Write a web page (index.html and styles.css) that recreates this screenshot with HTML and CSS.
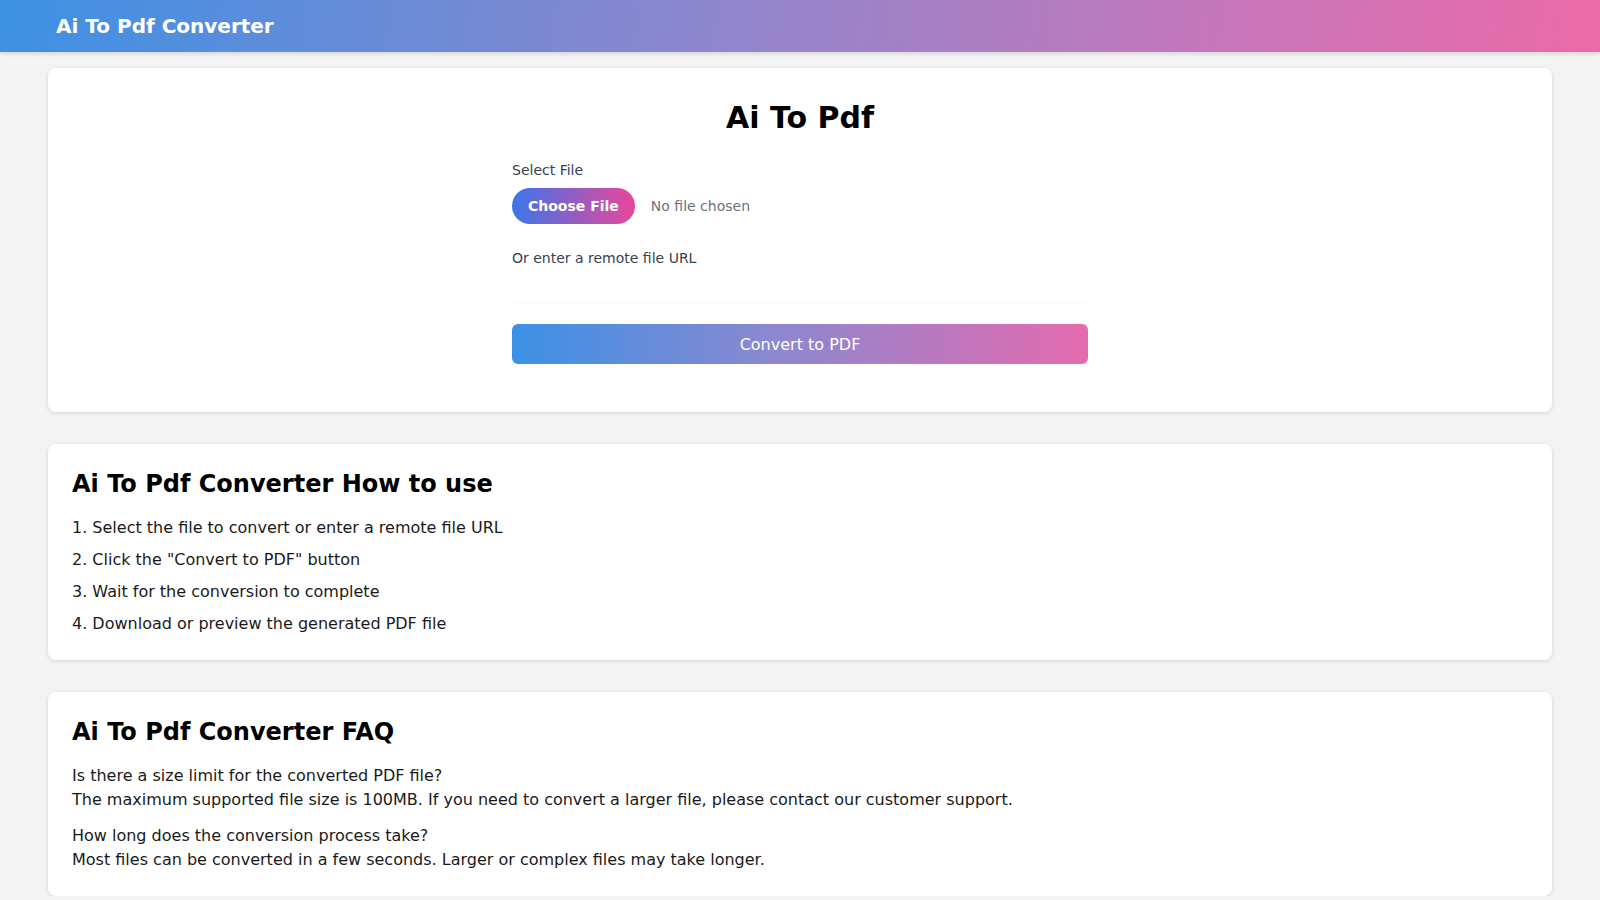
FILE: index.html
```html
<!DOCTYPE html>
<html lang="en">
<head>
<meta charset="utf-8">
<title>Ai To Pdf Converter</title>
<link rel="stylesheet" href="styles.css">
</head>
<body>
<header class="topbar">
  <div class="brand">Ai To Pdf Converter</div>
</header>
<main class="container">
  <section class="card tool">
    <h1 class="tool-title">Ai To Pdf</h1>
    <form class="form">
      <label class="label">Select File</label>
      <div class="file-row">
        <span class="file-btn">Choose File</span>
        <span class="file-name">No file chosen</span>
      </div>
      <label class="label label-url">Or enter a remote file URL</label>
      <input class="url-input" type="text">
      <button class="convert" type="button">Convert to PDF</button>
    </form>
  </section>
  <section class="card info">
    <h2 class="card-title">Ai To Pdf Converter How to use</h2>
    <ol class="steps">
      <li>1. Select the file to convert or enter a remote file URL</li>
      <li>2. Click the "Convert to PDF" button</li>
      <li>3. Wait for the conversion to complete</li>
      <li>4. Download or preview the generated PDF file</li>
    </ol>
  </section>
  <section class="card info">
    <h2 class="card-title">Ai To Pdf Converter FAQ</h2>
    <div class="faq">
      <p>Is there a size limit for the converted PDF file?</p>
      <p>The maximum supported file size is 100MB. If you need to convert a larger file, please contact our customer support.</p>
    </div>
    <div class="faq">
      <p>How long does the conversion process take?</p>
      <p>Most files can be converted in a few seconds. Larger or complex files may take longer.</p>
    </div>
  </section>
</main>
</body>
</html>
```
FILE: styles.css
```css
* { box-sizing: border-box; }
html, body { margin: 0; padding: 0; }
body {
  font-family: "DejaVu Sans", sans-serif;
  background: #f3f3f3;
  color: #111;
}
.topbar {
  height: 52px;
  display: flex;
  align-items: center;
  padding: 0 56px;
  background: linear-gradient(100deg, #3d91e4 0%, #8f86cc 45%, #c477bb 75%, #ec6aa8 100%);
  box-shadow: 0 2px 4px rgba(0,0,0,0.12);
}
.brand {
  color: #fff;
  font-weight: bold;
  font-size: 20px;
}
.container {
  padding: 16px 48px 0;
  display: flex;
  flex-direction: column;
  gap: 32px;
}
.card {
  background: #fff;
  border-radius: 8px;
  box-shadow: 0 1px 4px rgba(0,0,0,0.12);
}
.tool {
  padding: 32px 32px 48px;
}
.tool-title {
  margin: 0;
  text-align: center;
  font-size: 30px;
  line-height: 36px;
  font-weight: bold;
  color: #000;
}
.form {
  width: 576px;
  margin: 24px auto 0;
  display: flex;
  flex-direction: column;
}
.label {
  font-size: 14px;
  line-height: 20px;
  color: #374151;
}
.file-row {
  margin-top: 8px;
  display: flex;
  align-items: center;
  gap: 16px;
}
.file-btn {
  height: 36px;
  display: inline-flex;
  align-items: center;
  padding: 0 16px;
  border-radius: 18px;
  background: linear-gradient(90deg, #3c76ea, #e9469a);
  color: #fff;
  font-weight: bold;
  font-size: 14px;
}
.file-name {
  font-size: 14px;
  color: #6b7280;
}
.label-url {
  margin-top: 24px;
}
.url-input {
  margin-top: 8px;
  height: 26px;
  border: none;
  border-radius: 4px;
  box-shadow: 0 1px 2px rgba(0,0,0,0.04);
  outline: none;
  background: #fff;
}
.convert {
  margin-top: 22px;
  height: 40px;
  border: none;
  border-radius: 6px;
  background: linear-gradient(90deg, #3b91e5 0%, #8b88d0 45%, #e56aae 100%);
  color: #fff;
  font-family: "DejaVu Sans", sans-serif;
  font-size: 16px;
}
.info {
  padding: 24px 24px 24px;
}
.card-title {
  margin: 0;
  font-size: 24px;
  line-height: 32px;
  font-weight: bold;
  color: #000;
}
.steps {
  list-style: none;
  margin: 16px 0 0;
  padding: 0;
  display: flex;
  flex-direction: column;
  gap: 8px;
}
.steps li {
  font-size: 16px;
  line-height: 24px;
  color: #1a1a1a;
}
.faq {
  margin-top: 12px;
}
.card-title + .faq {
  margin-top: 16px;
}
.faq p {
  margin: 0;
  font-size: 16px;
  line-height: 24px;
  color: #1a1a1a;
}
```
